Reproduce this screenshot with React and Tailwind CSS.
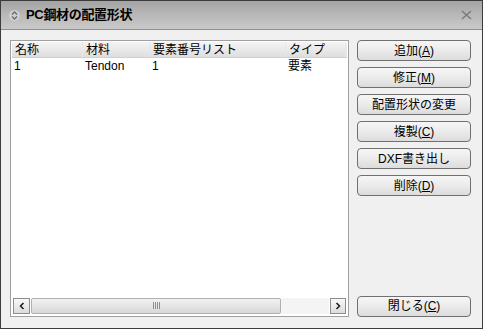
import React from "react"

const font = { fontFamily: '"Liberation Sans", "Noto Sans CJK JP", sans-serif' }

function Btn({ children, className = "" }) {
  return (
    <button
      className={`h-[21px] w-[114px] rounded-[4px] border border-[#707070] bg-gradient-to-b from-[#f6f6f6] via-[#ebebeb] to-[#dcdcdc] text-[12px] leading-none text-black ${className}`}
    >
      {children}
    </button>
  )
}

function U({ children }) {
  return <span className="underline underline-offset-1">{children}</span>
}

export default function App() {
  const cols = [
    { label: "名称", w: "w-[71px]" },
    { label: "材料", w: "w-[67px]" },
    { label: "要素番号リスト", w: "w-[136px]" },
    { label: "タイプ", w: "w-[60px]" },
  ]
  const row = ["1", "Tendon", "1", "要素"]

  return (
    <div className="w-[483px] h-[329px] bg-[#f0f0f0] border border-[#3c3c3c] flex flex-col overflow-hidden" style={font}>
      {/* Title bar */}
      <div className="h-[29px] shrink-0 flex items-center bg-gradient-to-b from-[#a4a4a4] via-[#b8b8b8] to-[#cacaca] border-b border-[#909090] pl-[8px] pr-[10px]">
        <div className="w-[11px] h-[11px] rounded-full bg-[#cfcfcf] flex flex-col items-center justify-center mr-[6px]">
          <svg width="7" height="9" viewBox="0 0 7 9">
            <path d="M1 3.5 L3.5 1 L6 3.5" fill="none" stroke="#6a6a6a" strokeWidth="1.3" />
            <path d="M1 5.5 L3.5 8 L6 5.5" fill="none" stroke="#6a6a6a" strokeWidth="1.3" />
          </svg>
        </div>
        <span className="text-[13px] font-bold text-black tracking-tight">PC鋼材の配置形状</span>
        <div className="ml-auto">
          <svg width="11" height="10" viewBox="0 0 11 10">
            <path d="M1 1 L10 9 M10 1 L1 9" stroke="#7c7c7c" strokeWidth="1.6" />
          </svg>
        </div>
      </div>

      {/* Body */}
      <div className="flex-1 flex pt-[10px] pl-[9px] pr-[11px] pb-[11px] gap-[8px]">
        {/* List view */}
        <div className="w-[341px] border border-[#a0a0a0] bg-white p-[1px] flex flex-col">
          <div className="h-[16px] flex bg-gradient-to-b from-[#f4f4f4] to-[#dedede] border-b border-[#d0d0d0] text-[12px] leading-[16px] text-black">
            {cols.map((c) => (
              <div key={c.label} className={`${c.w} pl-[3px] border-r border-[#e8e8e8] shrink-0`}>
                {c.label}
              </div>
            ))}
            <div className="flex-1" />
          </div>
          <div className="h-[16px] flex text-[12px] leading-[16px] text-black">
            {row.map((v, i) => (
              <div key={i} className={`${cols[i].w} pl-[2px] shrink-0`}>
                {v}
              </div>
            ))}
          </div>
          <div className="flex-1" />
          {/* Horizontal scrollbar */}
          <div className="h-[18px] flex items-center gap-[1px] px-[1px] pb-[1px]">
            <div className="w-[17px] h-[16px] border border-[#8c8c8c] bg-gradient-to-b from-[#f8f8f8] to-[#dcdcdc] flex items-center justify-center">
              <svg width="6" height="8" viewBox="0 0 6 8">
                <path d="M4.5 1 L1.5 4 L4.5 7" fill="none" stroke="#202020" strokeWidth="1.6" />
              </svg>
            </div>
            <div className="flex-1 h-[16px] flex bg-[#f4f4f4]">
              <div className="w-[250px] h-[16px] border border-[#b0b0b0] rounded-[2px] bg-gradient-to-b from-[#f2f2f2] to-[#d8d8d8] flex items-center justify-center gap-[1px]">
                {[0, 1, 2, 3].map((i) => (
                  <div key={i} className="w-[1px] h-[7px] bg-[#909090]" />
                ))}
              </div>
            </div>
            <div className="w-[16px] h-[16px] border border-[#8c8c8c] bg-gradient-to-b from-[#f8f8f8] to-[#dcdcdc] flex items-center justify-center">
              <svg width="6" height="8" viewBox="0 0 6 8">
                <path d="M1.5 1 L4.5 4 L1.5 7" fill="none" stroke="#202020" strokeWidth="1.6" />
              </svg>
            </div>
          </div>
        </div>

        {/* Buttons */}
        <div className="flex flex-col w-[114px]">
          <div className="flex flex-col gap-[6px]">
            <Btn>追加(<U>A</U>)</Btn>
            <Btn>修正(<U>M</U>)</Btn>
            <Btn>配置形状の変更</Btn>
            <Btn>複製(<U>C</U>)</Btn>
            <Btn>DXF書き出し</Btn>
            <Btn>削除(<U>D</U>)</Btn>
          </div>
          <div className="mt-auto">
            <Btn>閉じる(<U>C</U>)</Btn>
          </div>
        </div>
      </div>
    </div>
  )
}
